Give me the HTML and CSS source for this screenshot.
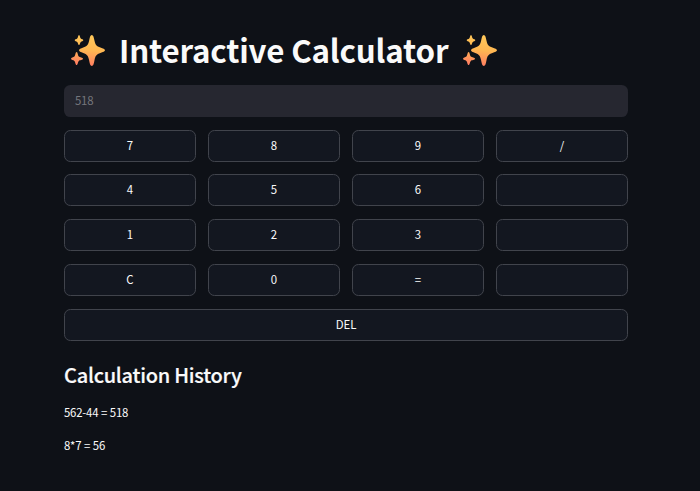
FILE: index.html
```html
<!DOCTYPE html>
<html lang="en">
<head>
<meta charset="utf-8">
<title>Interactive Calculator</title>
<link rel="stylesheet" href="styles.css">
</head>
<body>
<svg class="defs" width="0" height="0" aria-hidden="true">
  <defs>
    <linearGradient id="gold" gradientUnits="userSpaceOnUse" x1="20" y1="0" x2="16" y2="32">
      <stop offset="0" stop-color="#ffc95a"/>
      <stop offset=".5" stop-color="#ffb752"/>
      <stop offset="1" stop-color="#ff7b62"/>
    </linearGradient>
    <symbol id="sparkles" viewBox="0 0 36 34">
      <g fill="url(#gold)">
        <path d="M21.8 1C23.3 1 23.8 3.4 24.5 6.7C25.5 11 26.5 12.2 30.4 13.5C33 14.4 35 15 35 16.3C35 17.6 33 18.1 30.4 19C26.5 20.3 25.3 21.8 24.5 26.3C23.9 29.7 23.3 32 21.8 32C20.3 32 19.7 29.7 19.1 26.3C18.3 21.8 17 20.3 13.2 19C10.7 18.1 9 17.6 9 16.3C9 15 10.7 14.4 13.2 13.5C17 12.2 18.1 11 19.1 6.7C19.8 3.4 20.3 1 21.8 1Z"/>
        <path d="M9 1C9.9 1 10 3.8 10.8 4.6C11.5 5.3 13.3 5.3 13.3 6.2C13.3 7.1 11.5 7.1 10.8 7.9C10 8.7 9.9 10.9 9 10.9C8.1 10.9 8 8.7 7.2 7.9C6.4 7.1 4.7 7.1 4.7 6.2C4.7 5.3 6.5 5.3 7.2 4.6C8 3.8 8.1 1 9 1Z"/>
        <path d="M6.6 18C7.8 18 7.8 21.5 8.8 22.5C9.7 23.5 13 23.4 13 24.7C13 25.9 9.7 25.9 8.8 26.9C7.8 27.9 7.8 31 6.6 31C5.4 31 5.4 27.9 4.4 26.9C3.5 25.9 1 25.9 1 24.7C1 23.4 3.5 23.5 4.4 22.5C5.4 21.5 5.4 18 6.6 18Z"/>
      </g>
    </symbol>
  </defs>
</svg>
<main class="app">
  <h1 class="title">
    <svg class="sparkle"><use href="#sparkles"/></svg>
    <span>Interactive Calculator</span>
    <svg class="sparkle"><use href="#sparkles"/></svg>
  </h1>
  <div class="display">518</div>
  <div class="keys">
    <button class="key">7</button><button class="key">8</button><button class="key">9</button><button class="key">/</button>
    <button class="key">4</button><button class="key">5</button><button class="key">6</button><button class="key"></button>
    <button class="key">1</button><button class="key">2</button><button class="key">3</button><button class="key"></button>
    <button class="key">C</button><button class="key">0</button><button class="key">=</button><button class="key"></button>
    <button class="key wide">DEL</button>
  </div>
  <h3 class="subtitle">Calculation History</h3>
  <p class="entry">562-44 = 518</p>
  <p class="entry">8*7 = 56</p>
</main>
</body>
</html>
```
FILE: styles.css
```css
* { box-sizing: border-box; }
body {
  margin: 0;
  background: #0e1117;
  color: #fafafa;
  font-family: "Noto Sans CJK SC", sans-serif;
  font-size: 11.4px;
}
.defs { position: absolute; }
.app {
  width: 564px;
  margin-left: 64px;
  padding-top: 31px;
}
.title {
  display: flex;
  align-items: center;
  height: 40px;
  margin: 0 0 14px;
  padding-left: 6px;
  font-size: 31.3px;
  font-weight: 700;
  letter-spacing: -0.17px;
  line-height: 38px;
  white-space: nowrap;
}
.title span { width: 342px; height: 40px; padding-left: 13px; }
.sparkle { flex: none; width: 36px; height: 34px; margin-top: -1px; }
.title span + .sparkle { margin-left: 14px; }
.display {
  height: 32px;
  margin-bottom: 12.6px;
  padding-left: 11px;
  border-radius: 6.4px;
  background: #262730;
  color: #75767c;
  letter-spacing: -0.2px;
  line-height: 31px;
}
.keys {
  display: grid;
  grid-template-columns: repeat(4, 1fr);
  grid-auto-rows: 32px;
  gap: 12.8px 12px;
}
.key {
  padding: 0 0 2px;
  border: 1px solid #41444c;
  border-radius: 6.4px;
  background: #131720;
  color: inherit;
  font: inherit;
  line-height: 28px;
}
.wide { grid-column: 1 / -1; }
.subtitle {
  margin: 19.2px 0 0;
  font-size: 20px;
  font-weight: 500;
  letter-spacing: -0.25px;
  line-height: 30px;
  -webkit-text-stroke: 0.2px currentColor;
}
.entry {
  margin: 12px 0 0;
  letter-spacing: -0.2px;
  word-spacing: 0.3px;
  line-height: 21px;
}
```
